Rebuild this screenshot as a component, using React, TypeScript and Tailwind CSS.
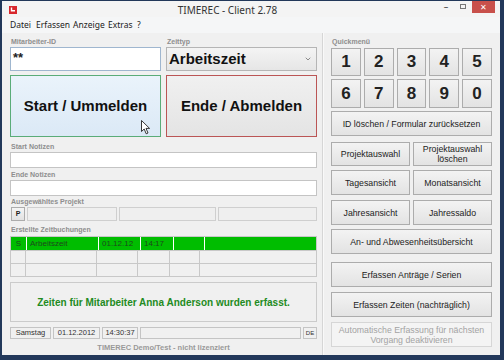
import React from "react"
import { ChevronDown } from "lucide-react"

const btn =
  "flex items-center justify-center text-center border border-[#acacac] bg-linear-to-b from-[#f3f3f3] to-[#e3e3e3] text-[8.75px] leading-[10px] text-[#222]"

const label = "h-[10px] leading-[10px] text-[7px] font-bold text-[#8e8e8e] pl-[1px]"

function Cursor() {
  return (
    <svg className="absolute left-[131px] top-[45px]" width="10" height="15" viewBox="0 0 10 15">
      <path d="M0.5 0.5 L0.5 11.5 L3.2 9 L5.2 13.8 L7 13 L5 8.4 L8.6 8.4 Z" fill="#fff" stroke="#222" strokeWidth="0.9" />
    </svg>
  )
}

function AppIcon() {
  return (
    <svg width="8" height="8" viewBox="0 0 8 8">
      <rect width="8" height="8" fill="#d8272d" />
      <path d="M2.5 1.5 V4.8 H6" stroke="#fff" strokeWidth="1.4" fill="none" />
    </svg>
  )
}

const menu = [
  { name: "Datei", w: "w-[26px]" },
  { name: "Erfassen", w: "w-[37px]" },
  { name: "Anzeige", w: "w-[35px]" },
  { name: "Extras", w: "w-[29px]" },
  { name: "?", w: "w-[10px]" },
]

const gridCols = ["w-[15px]", "w-[71px]", "w-[41px]", "w-[32px]", "w-[30px]", "flex-1"]

export default function App() {
  return (
    <div className="w-[504px] h-[360px] bg-[#22385a] pl-[2px] pt-[1px] pr-[4px] pb-[5px] font-['Liberation_Sans',Arial,sans-serif]">
      <div className="h-full flex flex-col bg-[#f0f0f0]">
        {/* title bar */}
        <div className="relative h-[16px] flex items-center bg-[#f4f4f4] font-['Noto_Sans',sans-serif]">
          <div className="pl-[7px] pt-[1px]">
            <AppIcon />
          </div>
          <div className="flex-1 text-center text-[10px] leading-[16px] text-[#333] pt-[2px]">TIMEREC - Client 2.78</div>
          <div className="flex items-start self-start h-[13px]">
            <div className="w-[16px] text-center text-[9px] leading-[12px] text-[#333]">–</div>
            <div className="w-[18px] flex justify-center pt-[3px]">
              <div className="w-[6px] h-[5px] border border-[#777]" />
            </div>
            <div className="w-[23px] h-[12px] bg-[#c8504b] text-white text-[8px] leading-[12px] text-center">✕</div>
            <div className="w-[5px]" />
          </div>
        </div>

        {/* menu bar */}
        <div className="h-[16px] flex items-center pl-[8px] bg-[#f5f6f7] font-['Noto_Sans',sans-serif] text-[8.5px] text-[#1a1a1a]">
          {menu.map((m) => (
            <span key={m.name} className={m.w}>
              {m.name}
            </span>
          ))}
        </div>

        {/* content */}
        <div className="flex-1 flex pl-[8px]">
          {/* left column */}
          <div className="w-[307px] flex flex-col pt-[4px]">
            <div className="flex gap-[5px]">
              <div className="w-[151px] flex flex-col">
                <div className={label}>Mitarbeiter-ID</div>
                <div className="h-[24px] border border-[#9fb6cf] bg-white pl-[2px] text-[13px] font-bold leading-[20px] text-[#222]">**</div>
              </div>
              <div className="flex-1 flex flex-col">
                <div className={label}>Zeittyp</div>
                <div className="h-[24px] border border-[#b5b5b5] bg-linear-to-b from-[#f4f4f4] to-[#e6e6e6] flex items-center pl-[2px] pr-[4px]">
                  <span className="flex-1 text-[15px] font-bold text-[#111]">Arbeitszeit</span>
                  <ChevronDown size={8} strokeWidth={2.5} className="text-[#777]" />
                </div>
              </div>
            </div>

            <div className="relative flex gap-[5px] mt-[4px] h-[62px]">
              <div className="w-[151px] flex items-center justify-center border border-[#5aac78] bg-linear-to-b from-[#eaf3fb] to-[#dbe9f6] text-[15px] font-bold text-[#111]">
                Start / Ummelden
              </div>
              <div className="flex-1 flex items-center justify-center border border-[#bb5555] bg-linear-to-b from-[#f0f0f0] to-[#e4e4e4] text-[15px] font-bold text-[#111]">
                Ende / Abmelden
              </div>
              <Cursor />
            </div>

            <div className={`${label} mt-[5px]`}>Start Notizen</div>
            <div className="h-[16px] border border-[#c4c4c4] bg-white" />
            <div className={`${label} mt-[2px]`}>Ende Notizen</div>
            <div className="h-[16px] border border-[#c4c4c4] bg-white" />
            <div className={`${label} mt-[1px]`}>Ausgewähltes Projekt</div>
            <div className="h-[14px] flex gap-[2px]">
              <div className="w-[14px] ml-[1px] border border-[#acacac] bg-linear-to-b from-[#f4f4f4] to-[#e2e2e2] flex items-center justify-center text-[7px] font-bold text-[#222]">
                P
              </div>
              <div className="w-[90px] border border-[#cfcfcf] bg-[#efefef]" />
              <div className="w-[97px] border border-[#cfcfcf] bg-[#efefef]" />
              <div className="flex-1 border border-[#cfcfcf] bg-[#efefef]" />
            </div>

            <div className={`${label} mt-[3px] h-[12px] leading-[12px]`}>Erstellte Zeitbuchungen</div>
            <div className="h-[41px] border border-[#c8c8c8] bg-[#f0f0f0] flex flex-col">
              <div className="h-[13px] flex gap-[1px] bg-white text-[8px] leading-[13px] text-[#1d4a1d]">
                {["S", "Arbeitszeit", "01.12.12", "14:17", "", ""].map((t, i) => (
                  <div key={i} className={`${gridCols[i]} bg-[#00bd00] ${i === 0 ? "text-center" : "pl-[3px]"}`}>
                    {t}
                  </div>
                ))}
              </div>
              {[0, 1].map((r) => (
                <div key={r} className="h-[13px] flex border-t border-[#c8c8c8]">
                  {gridCols.map((c, i) => (
                    <div key={i} className={`${c} ${i < 5 ? "border-r border-[#c8c8c8]" : ""}`} />
                  ))}
                </div>
              ))}
            </div>

            <div className="mt-[5px] h-[40px] border border-[#cbcbcb] bg-[#f0f0f0] flex items-center justify-center text-[10px] font-bold text-[#228b22]">
              Zeiten für Mitarbeiter Anna Anderson wurden erfasst.
            </div>

            <div className="mt-[5px] h-[12px] flex gap-[2px] text-[7.5px] leading-[10px] text-[#333]">
              <div className="w-[41px] border border-[#c4c4c4] text-center">Samstag</div>
              <div className="w-[47px] border border-[#c4c4c4] text-center">01.12.2012</div>
              <div className="w-[36px] border border-[#c4c4c4] text-center">14:30:37</div>
              <div className="flex-1 border border-[#c4c4c4]" />
              <div className="w-[14px] border border-[#c4c4c4] text-center text-[6px]">DE</div>
            </div>

            <div className="mt-[3px] text-center text-[7.5px] font-bold text-[#999]">TIMEREC Demo/Test - nicht lizenziert</div>
          </div>

          {/* separator */}
          <div className="ml-[5px] w-[2px] border-l border-[#d6d6d6] bg-white/60" />

          {/* right column */}
          <div className="ml-[7px] w-[161px] flex flex-col pt-[4px]">
            <div className={`${label} h-[11px]`}>Quickmenü</div>
            <div className="grid grid-cols-5 gap-[3px]">
              {["1", "2", "3", "4", "5"].map((n) => (
                <div key={n} className={`${btn} h-[28px] text-[17px] font-bold text-[#111]`}>
                  {n}
                </div>
              ))}
            </div>
            <div className="grid grid-cols-5 gap-[3px] mt-[3px]">
              {["6", "7", "8", "9", "0"].map((n) => (
                <div key={n} className={`${btn} h-[29px] text-[17px] font-bold text-[#111]`}>
                  {n}
                </div>
              ))}
            </div>
            <div className={`${btn} h-[25px] mt-[3px]`}>ID löschen / Formular zurücksetzen</div>
            <div className="grid grid-cols-2 gap-[3px] mt-[6px]">
              <div className={`${btn} h-[24px]`}>Projektauswahl</div>
              <div className={`${btn} h-[24px]`}>
                Projektauswahl
                <br />
                löschen
              </div>
            </div>
            <div className="grid grid-cols-2 gap-[3px] mt-[4px]">
              <div className={`${btn} h-[25px]`}>Tagesansicht</div>
              <div className={`${btn} h-[25px]`}>Monatsansicht</div>
            </div>
            <div className="grid grid-cols-2 gap-[3px] mt-[5px]">
              <div className={`${btn} h-[25px]`}>Jahresansicht</div>
              <div className={`${btn} h-[25px]`}>Jahressaldo</div>
            </div>
            <div className={`${btn} h-[25px] mt-[4px]`}>An- und Abwesenheitsübersicht</div>
            <div className={`${btn} h-[25px] mt-[8px]`}>Erfassen Anträge / Serien</div>
            <div className={`${btn} h-[25px] mt-[5px]`}>Erfassen Zeiten (nachträglich)</div>
            <div className="mt-[5px] h-[25px] flex items-center justify-center text-center border border-[#d6d6d6] bg-[#f4f4f4] text-[8.75px] leading-[10px] text-[#a3a3a3]">
              Automatische Erfassung für nächsten
              <br />
              Vorgang deaktivieren
            </div>
          </div>
        </div>
      </div>
    </div>
  )
}
